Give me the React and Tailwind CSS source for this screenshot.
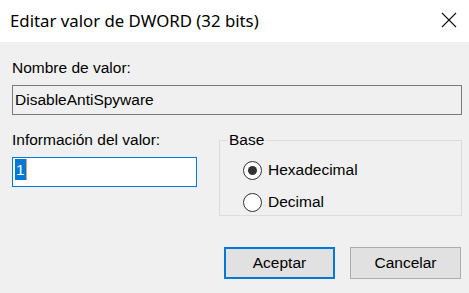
export default function App() {
  return (
    <div className="w-[469px] h-[293px] bg-[#f0f0f0] overflow-hidden flex flex-col text-black" style={{ fontFamily: '"Liberation Sans", Arial, sans-serif' }}>
      <div className="h-[42px] bg-white flex items-center justify-between pl-[10px] pr-[12px] shrink-0">
        <span className="text-[16.8px] leading-[22px] text-[#000]" style={{ fontFamily: '"Noto Sans", "Open Sans", sans-serif' }}>
          Editar valor de DWORD (32 bits)
        </span>
        <svg width="16" height="16" viewBox="0 0 16 16" className="mt-[-3px]">
          <path d="M1 1 L15 15 M15 1 L1 15" stroke="#111" strokeWidth="1.1" fill="none" />
        </svg>
      </div>
      <div className="flex flex-col pl-[12px] pr-[7px] text-[15.5px] leading-[18px]">
        <div className="mt-[17px]">Nombre de valor:</div>
        <div className="mt-[8px] h-[30px] border border-[#7a7a7a] bg-[#f0f0f0] pl-[2px] pt-[5px]">
          DisableAntiSpyware
        </div>
        <div className="mt-[16px] flex">
          <div className="w-[185px] flex flex-col">
            <div>Información del valor:</div>
            <div className="mt-[8px] h-[30px] border border-[#0078d7] bg-white pl-[2px] pt-[1px] flex items-start">
              <span className="inline-block h-[21px] leading-[21px] px-[1px] bg-[#0078d7] text-white">1</span>
              <span className="inline-block w-[1px] h-[21px] bg-[#e8a060]" />
            </div>
          </div>
          <fieldset className="ml-[22px] w-[243px] h-[85px] border border-[#dcdcdc]">
            <legend className="ml-[7px] px-[2px] leading-[18px]">Base</legend>
            <div className="flex items-center mt-[11px] h-[20px] pl-[23px]">
              <div className="w-[19px] h-[19px] rounded-full border border-[#333] bg-white flex items-center justify-center">
                <div className="w-[9px] h-[9px] rounded-full bg-[#333]" />
              </div>
              <span className="ml-[6px]">Hexadecimal</span>
            </div>
            <div className="flex items-center mt-[12px] h-[20px] pl-[23px]">
              <div className="w-[19px] h-[19px] rounded-full border border-[#333] bg-white" />
              <span className="ml-[6px]">Decimal</span>
            </div>
          </fieldset>
        </div>
        <div className="mt-[31px] flex justify-end gap-[15px] mr-[1px]">
          <button className="w-[111px] h-[32px] bg-[#e1e1e1] border-2 border-[#0078d7] flex items-center justify-center">Aceptar</button>
          <button className="w-[111px] h-[32px] bg-[#e1e1e1] border border-[#adadad] flex items-center justify-center">Cancelar</button>
        </div>
      </div>
    </div>
  );
}
